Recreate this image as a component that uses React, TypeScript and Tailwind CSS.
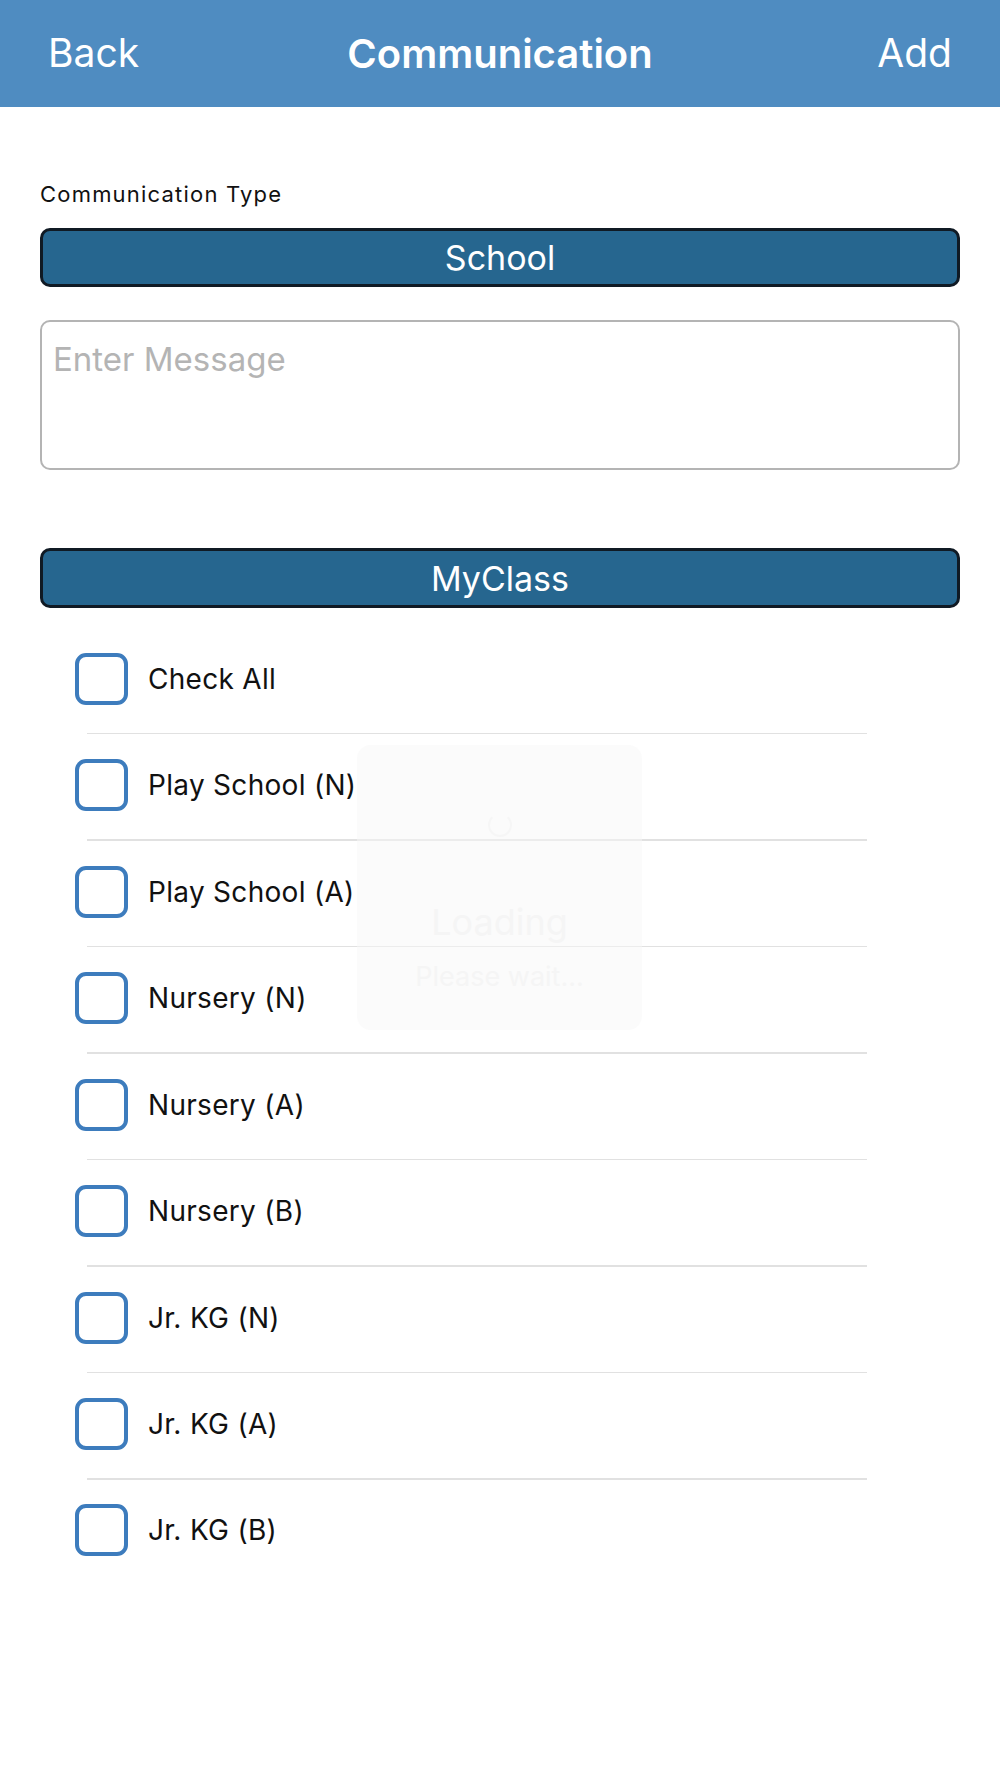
import React from 'react';

const classes = [
  'Play School (N)',
  'Play School (A)',
  'Nursery (N)',
  'Nursery (A)',
  'Nursery (B)',
  'Jr. KG (N)',
  'Jr. KG (A)',
  'Jr. KG (B)',
];

const CheckRow: React.FC<{ label: string; last?: boolean }> = ({ label, last }) => (
  <div className="flex flex-col">
    <div className="h-[104.95px] flex items-center pl-[35px] pb-[3px]">
      <div className="w-[53px] h-[52px] border-4 border-[#3d7cbd] rounded-[11px] shrink-0" />
      <span className="ml-[20px] text-[28px] tracking-[0.3px] text-[#111111]">{label}</span>
    </div>
    {!last && <div className="h-[1.5px] ml-[47px] w-[780px] bg-[#e1e1e1]" />}
  </div>
);

export default function App() {
  return (
    <div className="relative w-[1000px] h-[1778px] bg-white font-['Inter','Liberation_Sans',sans-serif]">
      {/* Nav bar */}
      <div className="h-[107px] bg-[#4f8cc1] grid grid-cols-[1fr_auto_1fr] items-center px-[48px] text-white text-[39px]">
        <span>Back</span>
        <span className="font-semibold text-[40px]">Communication</span>
        <span className="text-right">Add</span>
      </div>

      <div className="px-[40px]">
        <div className="mt-[76px] text-[22px] leading-[22px] tracking-[1.2px] text-[#111111]">Communication Type</div>

        <div className="mt-[23px] h-[59px] bg-[#26668f] border-[3px] border-[#101a24] rounded-[10px] flex items-center justify-center text-white text-[34px]">
          School
        </div>

        <textarea
          placeholder="Enter Message"
          className="mt-[33px] block w-full h-[150px] border-2 border-[#b4b4b4] rounded-[10px] pl-[11px] pt-[17px] text-[33px] leading-[40px] resize-none outline-none placeholder:text-[#b4b4b4]"
        />

        <div className="mt-[78px] h-[60px] bg-[#26668f] border-[3px] border-[#101a24] rounded-[10px] flex items-center justify-center text-white text-[34px]">
          MyClass
        </div>

        <div className="mt-[20px]">
          <CheckRow label="Check All" />
          {classes.map((c, i) => (
            <CheckRow key={c} label={c} last={i === classes.length - 1} />
          ))}
        </div>
      </div>

      {/* faded loading overlay */}
      <div className="absolute left-[357px] top-[745px] w-[285px] h-[285px] rounded-[14px] bg-[#f8f8f8]/50 flex flex-col items-center text-[#f5f5f5]">
        <div className="mt-[68px] w-[24px] h-[24px] rounded-full border-2 border-[#f6f6f6] border-t-transparent" />
        <div className="mt-[58px] text-[36px]">Loading</div>
        <div className="mt-[8px] text-[27px]">Please wait...</div>
      </div>
    </div>
  );
}
